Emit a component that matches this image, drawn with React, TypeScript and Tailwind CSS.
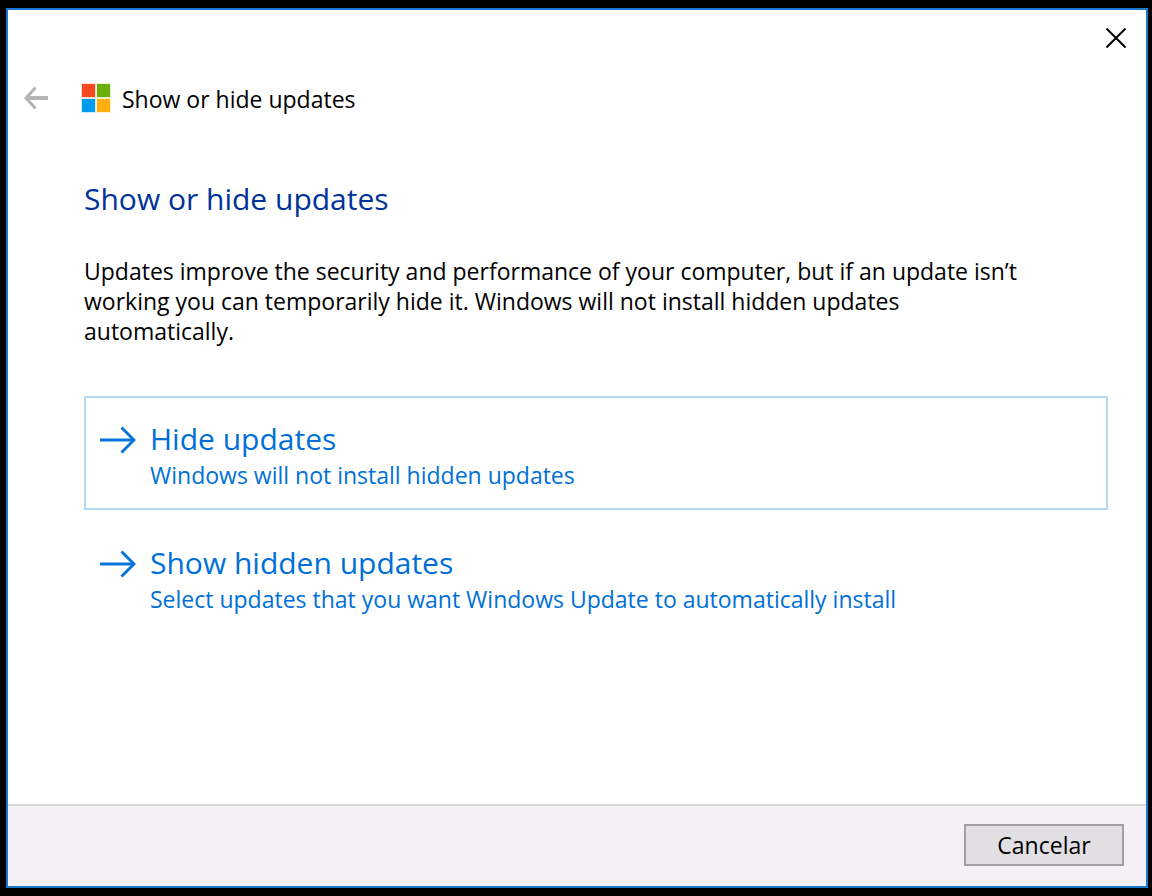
function ForwardArrow() {
  return (
    <svg
      aria-hidden="true"
      className="mt-[13px] h-7 w-9 shrink-0"
      viewBox="0 0 36 28"
      fill="none"
      stroke="#0a74da"
    >
      <path d="M0 14H34" strokeWidth="3.2" />
      <path d="M21.5 1.5L34 14L21.5 26.5" strokeWidth="3" />
    </svg>
  );
}

function CommandLink({ title, note, outlined }: { title: string; note: string; outlined?: boolean }) {
  return (
    <button
      type="button"
      className={`flex w-full items-start gap-[14px] border-2 px-[14px] pt-[15px] pb-[18px] text-left text-[#0070d8] ${
        outlined ? "border-[#b3d8f5]" : "border-transparent"
      }`}
    >
      <ForwardArrow />
      <span className="block pt-1">
        <span className="block text-[30px] leading-[43px]">{title}</span>
        <span className="block text-[23px] leading-[30px]">{note}</span>
      </span>
    </button>
  );
}

export default function App() {
  return (
    <div className="flex min-h-screen flex-col bg-black pt-2 pr-1 pb-2 pl-[6px] font-['Open_Sans','Noto_Sans',sans-serif] text-black">
      <div role="dialog" aria-labelledby="caption" className="flex flex-1 flex-col border-2 border-[#1878d0] bg-white">
        <div className="flex justify-end pt-[18px] pr-5">
          <button type="button" aria-label="Close" className="block">
            <svg className="h-5 w-5" viewBox="0 0 20 20" fill="none" stroke="#000" strokeWidth="2">
              <path d="M0.5 0.5L19.5 19.5M19.5 0.5L0.5 19.5" />
            </svg>
          </button>
        </div>

        <header className="mt-[34px] flex items-center pl-4">
          <button type="button" aria-label="Back" disabled className="block">
            <svg className="h-6 w-6" viewBox="0 0 24 24" fill="none" stroke="#b4b4b4">
              <path d="M2 12H24" strokeWidth="4" />
              <path d="M11.5 1.5L2 12L11.5 22.5" strokeWidth="3" />
            </svg>
          </button>
          <svg aria-hidden="true" className="ml-[33px] h-[30px] w-[30px]" viewBox="0 0 30 30">
            <path d="M0 0H15V15H0Z" fill="#fddcd4" />
            <path d="M15 0H30V15H15Z" fill="#e2f1ce" />
            <path d="M0 15H15V30H0Z" fill="#ccecfb" />
            <path d="M15 15H30V30H15Z" fill="#fff0cf" />
            <path d="M1 1H14V14H1Z" fill="#f84a20" />
            <path d="M16 1H29V14H16Z" fill="#6cae0a" />
            <path d="M1 16H14V29H1Z" fill="#009cec" />
            <path d="M16 16H29V29H16Z" fill="#ffb010" />
          </svg>
          <span id="caption" className="ml-[11px] pt-[2px] text-[23px] leading-[30px]">
            Show or hide updates
          </span>
        </header>

        <main className="flex-1 pt-[63px] pr-[38px] pb-8 pl-[76px]">
          <h1 className="text-[30px] leading-[44px] text-[#003399]">Show or hide updates</h1>
          <p className="mt-[35px] max-w-[940px] text-[23px] leading-[30px]">
            Updates improve the security and performance of your computer, but if an update isn’t working you can
            temporarily hide it. Windows will not install hidden updates automatically.
          </p>
          <div className="mt-[50px] flex flex-col gap-[10px]">
            <CommandLink title="Hide updates" note="Windows will not install hidden updates" outlined />
            <CommandLink
              title="Show hidden updates"
              note="Select updates that you want Windows Update to automatically install"
            />
          </div>
        </main>

        <footer className="flex justify-end border-t-2 border-[#d9d9d9] bg-[#f4f0f6] pt-[18px] pr-[22px] pb-5">
          <button
            type="button"
            className="h-[42px] w-40 border-2 border-[#a0a0a0] bg-[#e1dfe2] text-[23px] leading-[30px]"
          >
            Cancelar
          </button>
        </footer>
      </div>
    </div>
  );
}
